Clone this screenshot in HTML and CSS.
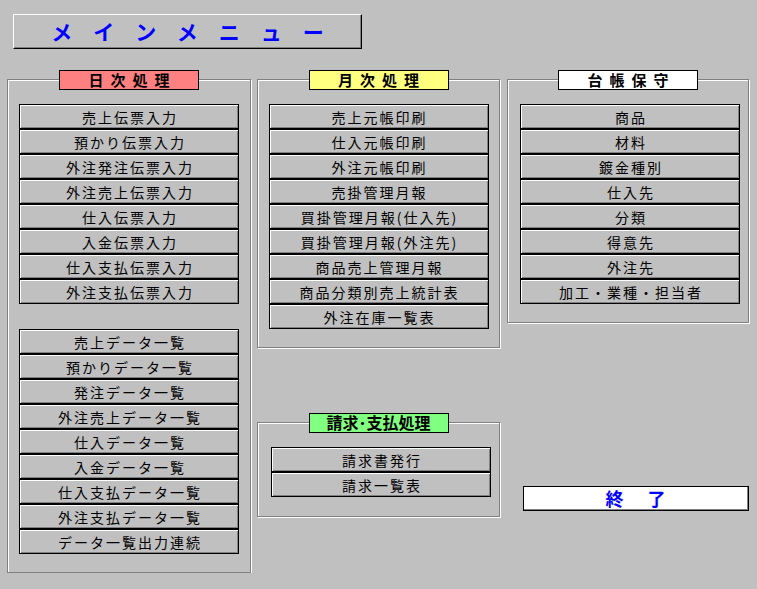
FILE: index.html
```html
<!doctype html>
<html>
  <head>
    <meta charset="UTF-8">
    <title>メインメニュー</title>
    <link rel="stylesheet" href="styles.css">
  </head>
  <body>
    <div class="title">メインメニュー</div>

    <div class="row">
      <!-- 日次処理 -->
      <div class="col col-daily">
        <div class="frame frame-daily">
          <div class="caption pink">日次処理</div>
          <div class="btns">
            <button class="btn">売上伝票入力</button>
            <button class="btn">預かり伝票入力</button>
            <button class="btn">外注発注伝票入力</button>
            <button class="btn">外注売上伝票入力</button>
            <button class="btn">仕入伝票入力</button>
            <button class="btn">入金伝票入力</button>
            <button class="btn">仕入支払伝票入力</button>
            <button class="btn">外注支払伝票入力</button>
          </div>
          <div class="btns btns-list">
            <button class="btn">売上データ一覧</button>
            <button class="btn">預かりデータ一覧</button>
            <button class="btn">発注データ一覧</button>
            <button class="btn">外注売上データ一覧</button>
            <button class="btn">仕入データ一覧</button>
            <button class="btn">入金データ一覧</button>
            <button class="btn">仕入支払データ一覧</button>
            <button class="btn">外注支払データ一覧</button>
            <button class="btn">データ一覧出力連続</button>
          </div>
        </div>
      </div>

      <!-- 月次処理 / 請求・支払処理 -->
      <div class="col col-monthly">
        <div class="frame">
          <div class="caption yellow">月次処理</div>
          <div class="btns">
            <button class="btn">売上元帳印刷</button>
            <button class="btn">仕入元帳印刷</button>
            <button class="btn">外注元帳印刷</button>
            <button class="btn">売掛管理月報</button>
            <button class="btn">買掛管理月報(仕入先)</button>
            <button class="btn">買掛管理月報(外注先)</button>
            <button class="btn">商品売上管理月報</button>
            <button class="btn">商品分類別売上統計表</button>
            <button class="btn">外注在庫一覧表</button>
          </div>
        </div>

        <div class="frame frame-billing">
          <div class="caption green caption-tight">請求･支払処理</div>
          <div class="btns">
            <button class="btn">請求書発行</button>
            <button class="btn">請求一覧表</button>
          </div>
        </div>
      </div>

      <!-- 台帳保守 -->
      <div class="col col-master">
        <div class="frame">
          <div class="caption white">台帳保守</div>
          <div class="btns">
            <button class="btn">商品</button>
            <button class="btn">材料</button>
            <button class="btn">鍍金種別</button>
            <button class="btn">仕入先</button>
            <button class="btn">分類</button>
            <button class="btn">得意先</button>
            <button class="btn">外注先</button>
            <button class="btn">加工・業種・担当者</button>
          </div>
        </div>
        <button class="btn btn-exit">終　了</button>
      </div>
    </div>
  </body>
</html>
```

FILE: styles.css
```css
* {
  box-sizing: border-box;
}

/* Dialog background */
body {
  margin: 0;
  padding: 14px 0 0 0;
  background: #c0c0c0;
  font-family: "Noto Sans CJK JP", "DejaVu Sans", sans-serif;
  color: #000;
}

/* Big title bar */
.title {
  margin-left: 13px;
  width: 349px;
  height: 35px;
  border: 1px solid;
  border-color: #fff #000 #000 #fff;
  box-shadow: inset -1px -1px 0 #808080;
  color: #0000ff;
  font-size: 21px;
  font-weight: bold;
  line-height: 32px;
  letter-spacing: 21px;
  text-indent: 21px;
  text-align: center;
}

/* Three columns */
.row {
  display: flex;
  margin-top: 21px;
}

.col {
  display: flex;
  flex-direction: column;
}

.col-daily {
  margin-left: 7px;
  width: 244px;
}

.col-monthly {
  margin-left: 6px;
  width: 243px;
}

.col-master {
  margin-left: 7px;
  width: 242px;
}

/* Etched group frame */
.frame {
  margin-top: 9px;
  border: 1px solid #808080;
  box-shadow: 1px 1px 0 #fff, inset 1px 1px 0 #fff;
  padding-bottom: 18px;
}

.frame-billing {
  margin-top: 74px;
  padding-bottom: 19px;
}

/* Caption over the frame line */
.caption {
  width: 140px;
  height: 20px;
  margin: -10px auto 0;
  border: 1px solid #000;
  font-size: 15px;
  font-weight: bold;
  line-height: 17px;
  text-align: center;
  letter-spacing: 7px;
  text-indent: 7px;
}

.caption-tight {
  font-size: 16px;
  letter-spacing: 0;
  text-indent: 0;
}

.pink { background: #ff8080; }
.yellow { background: #ffff80; }
.green { background: #80ff80; }
.white { background: #fff; }

/* Button stacks */
.btns {
  display: flex;
  flex-direction: column;
  align-items: center;
  margin-top: 14px;
}

.btns-list {
  margin-top: 25px;
}

.frame-billing .btns {
  align-items: flex-start;
  padding-left: 13px;
}

.col-master .btns {
  align-items: flex-start;
  padding-left: 12px;
}

.btn {
  display: block;
  width: 220px;
  height: 25px;
  margin: 0;
  padding: 0 0 0 2px;
  border: 1px solid #000;
  background: #c0c0c0;
  box-shadow: inset 1px 1px 0 #fff, inset -1px -1px 0 #808080;
  font-family: "Noto Sans CJK JP", "DejaVu Sans", sans-serif;
  font-size: 14px;
  line-height: 22px;
  letter-spacing: 2px;
  color: #000;
  text-align: center;
  cursor: pointer;
}

/* Exit button */
.btn-exit {
  margin: 163px 0 0 16px;
  width: 226px;
  background: #fff;
  box-shadow: inset -1px -1px 0 #808080;
  color: #0000ff;
  font-size: 18px;
  font-weight: bold;
  letter-spacing: 3px;
  line-height: 21px;
}
```
